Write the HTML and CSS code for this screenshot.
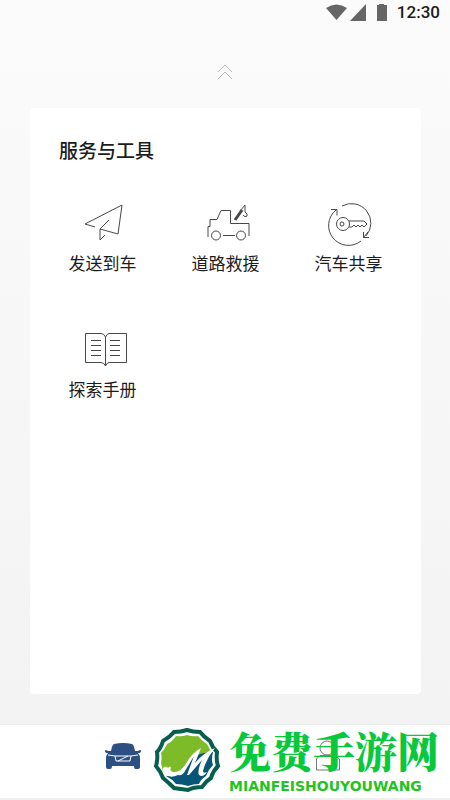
FILE: index.html
```
<!DOCTYPE html>
<html lang="zh-CN">
<head>
  <meta charset="UTF-8" />
  <meta name="viewport" content="width=device-width, initial-scale=1.0" />
  <title>服务与工具</title>
  <link rel="stylesheet" href="styles.css">
</head>
<body>
  <header class="status-bar">
    <svg class="status-icons" width="64" height="18" viewBox="0 0 64 18" aria-hidden="true">
      <path d="M1 5Q11.500 -2 22 5L11.500 17Z" />
      <path d="M41 1V18H25Z" />
      <path d="M52 2h2V1h5v1h3v16H52Z" />
    </svg>
    <span class="clock">12:30</span>
  </header>

  <button class="collapse" aria-label="收起">
    <svg width="16" height="16" viewBox="0 0 16 16">
      <path d="M1 8L8 1l7 7M1 15L8 8l7 7" />
    </svg>
  </button>

  <main class="card">
    <h1>服务与工具</h1>
    <div class="tools">
      <button class="tool">
        <svg viewBox="0 0 48 48">
          <path d="M16 27L6 24L43 5L39 34L21 29L30 20M21 29V40L26 35" />
        </svg>
        <span>发送到车</span>
      </button>
      <button class="tool">
        <svg viewBox="0 0 48 48">
          <path d="M6 37V26.500H8V19.500H15L19 10.500H28.500V23.500H47V36M21 35.500H33" />
          <circle cx="14" cy="35.500" r="4.500" />
          <circle cx="39" cy="35.500" r="4.500" />
          <path class="crane" d="M33 20L40 10" />
          <path d="M38 11L43 5V12Q46 14 45 16Q43 18 41 15" />
        </svg>
        <span>道路救援</span>
      </button>
      <button class="tool">
        <svg viewBox="0 0 48 48">
          <path d="M17 6A19.500 19.500 0 0 1 41 36M36 41A19.500 19.500 0 0 1 11 10M6 9.500h6v6M44 37.500H38.500V32M38.500 37.500L43 32" />
          <circle cx="18" cy="24" r="6.500" />
          <circle cx="17" cy="24" r="2" />
          <path d="M24 21H39L42 24L39 27L37 25L35 27L33 25L31 27L29 25L27 27H24" />
        </svg>
        <span>汽车共享</span>
      </button>
      <button class="tool">
        <svg viewBox="0 0 48 48">
          <path d="M26.500 11Q25 7.500 22 7.500H6.500V36.500H22Q25 36.500 26.500 40Q28 36.500 30 36.500H47.500V7.500H30Q28 7.500 26.500 11V39" />
          <path d="M12 14.500h10M12 19.500h10M12 24.500h10M12 29.500h10M31 14.500h10M31 19.500h10M31 24.500h10M31 29.500h10" />
        </svg>
        <span>探索手册</span>
      </button>
    </div>
  </main>

  <nav class="tab-bar">
    <button class="tab" aria-label="车辆">
      <svg class="car" width="38" height="28" viewBox="0 0 38 28">
        <path d="M10 1Q19 -1 28 1Q30 2 31 8H34Q37 6 37 8Q37 10 34 10Q36 12 36 16V24Q36 26 34 26H31Q30 26 30 23H8Q8 26 6 26H4Q2 26 2 24V16Q2 12 4 10Q1 10 1 8Q1 6 4 8H7Q8 2 10 1Z" />
        <path class="grille" d="M4 12L11 13H27L34 12M11 13L12 18H26L27 13M14 18L24 13" />
      </svg>
    </button>
    <button class="tab" aria-label="我的">
      <svg class="person" width="26" height="34" viewBox="0 0 26 34">
        <circle cx="12" cy="8" r="7" />
        <path d="M1.500 30V19L5 15.500H20L24.500 19V30Z" />
      </svg>
    </button>

    <div class="site-mark">
      <svg width="68" height="66" viewBox="0 0 68 66" aria-hidden="true">
        <path class="ring" d="M21 4Q28 4 34 2Q40 4 47 4Q51 9 57 13Q59 19 64 24Q63 32 65 38Q60 43 58 50Q53 53 49 59Q41 59 35 62Q28 61 21 60Q16 55 10 50Q8 44 3 38Q5 31 4 24Q8 20 10 13Q17 9 21 4Z" />
        <path class="leaf" d="M23 8Q29 9 34 7Q40 9 45 8Q49 13 54 16Q56 21 60 25L34 50L10 44Q9 39 8 35Q9 30 8 25Q12 21 14 16Q20 13 23 8Z" />
        <path class="sea" d="M13 48Q27 48 34 35Q40 25 60 24Q58 32 60 37Q55 42 53 48Q48 51 46 56Q40 56 35 58Q29 56 23 56Q19 51 13 48Z" />
        <path class="swoosh" d="M10 40Q13 37 15 40Q17 37 18 40Q16 43 20 44Q28 45 34 34Q39 25 48 20Q45 28 42 35Q50 25 62 20Q53 31 50 43Q50 46 54 44Q50 50 46 47Q44 43 49 32L36 47H34L41 28L32 43Q30 48 25 47Q17 51 12 46Q9 43 10 40Z" />
      </svg>
      <div class="mark-text">
        <strong>免费手游网</strong>
        <span>MIANFEISHOUYOUWANG</span>
      </div>
    </div>
  </nav>
</body>
</html>
```

FILE: styles.css
```
* {
  box-sizing: border-box;
}

body {
  margin: 0;
  min-height: 100vh;
  display: flex;
  flex-direction: column;
  background: linear-gradient(#fbfbfb, #f2f2f2);
  color: #1c1c1c;
  font-family: Roboto, "Noto Sans CJK SC", sans-serif;
}

button {
  padding: 0;
  border: none;
  background: none;
  color: inherit;
  font: inherit;
  cursor: pointer;
}

svg {
  display: block;
  fill: none;
}

.status-bar {
  display: flex;
  justify-content: flex-end;
  align-items: center;
  gap: 8px;
  height: 24px;
  padding-right: 10px;
}

.status-icons {
  fill: #666;
}

.clock {
  font-size: 17px;
  font-weight: 500;
}

.collapse {
  align-self: center;
  margin: 40px 0 28px;
}

.collapse svg {
  stroke: #b8b8b8;
}

.card {
  flex: 1;
  margin: 0 29px 30px 30px;
  padding: 30px 11px;
  border-radius: 4px;
  background: #fff;
}

h1 {
  margin: 0 0 34px 18px;
  font-size: 19px;
  font-weight: 500;
  line-height: 28px;
}

.tools {
  display: grid;
  grid-template-columns: repeat(3, 1fr);
  row-gap: 50px;
}

.tool {
  display: flex;
  flex-direction: column;
  align-items: center;
  gap: 4px;
  font-size: 17px;
  line-height: 24px;
}

.tool svg {
  width: 48px;
  height: 48px;
  stroke: #484848;
}

.tool .crane {
  stroke-width: 3px;
}

.tab-bar {
  position: relative;
  display: grid;
  grid-template-columns: 1fr 1fr;
  height: 76px;
  padding: 0 20px 10px;
  border-top: 1px solid #ececec;
  border-bottom: 2px solid #f0f0f0;
  background: #fff;
}

.tab {
  display: flex;
  justify-content: center;
  align-items: center;
}

.car {
  fill: #2c4f84;
}

.car .grille {
  fill: none;
  stroke: #fff;
}

.person {
  stroke: #777;
}

/* site logo laid over the tabs */
.site-mark {
  position: absolute;
  right: 11px;
  top: 3px;
  display: flex;
  align-items: center;
  gap: 8px;
  pointer-events: none;
}

.ring {
  fill: #fff;
  stroke: #075d4e;
  stroke-width: 4px;
}

.leaf {
  fill: #7dbb29;
}

.sea {
  fill: #075579;
}

.swoosh {
  fill: #fff;
}

.mark-text {
  display: flex;
  flex-direction: column;
  gap: 6px;
}

.mark-text strong {
  color: #08c83c;
  font-family: "Noto Serif CJK SC", "Noto Sans CJK SC", serif;
  font-size: 42px;
  font-weight: 900;
  line-height: 44px;
}

.mark-text span {
  color: #22c322;
  font-family: "DejaVu Sans", sans-serif;
  font-size: 14px;
  font-weight: 700;
  line-height: 16px;
}
```
